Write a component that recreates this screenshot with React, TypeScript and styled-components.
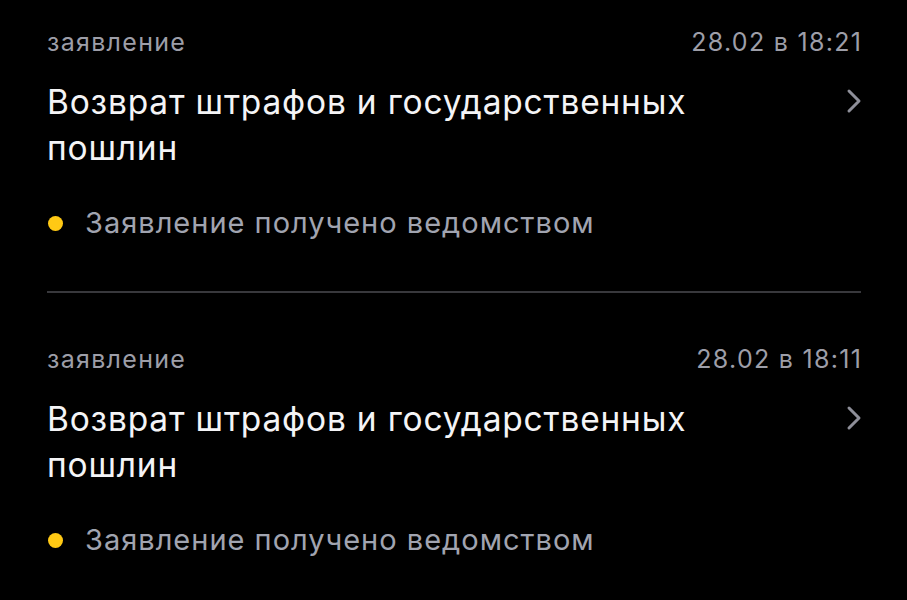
import React from "react";
import styled, { createGlobalStyle } from "styled-components";

const GlobalStyle = createGlobalStyle`
  html, body {
    margin: 0;
    padding: 0;
    background: #000;
  }
  body {
    font-family: Inter, "Noto Sans", "Liberation Sans", sans-serif;
    -webkit-font-smoothing: antialiased;
  }
`;

const List = styled.div`
  display: flex;
  flex-direction: column;
  padding: 28px 46px 0 47px;
  background: #000;
  min-height: 600px;
  box-sizing: border-box;
`;

const Item = styled.div`
  display: flex;
  flex-direction: column;
  padding-bottom: 50px;
`;

const Divider = styled.div`
  height: 2px;
  background: #38383c;
  margin-bottom: 52px;
`;

const Header = styled.div`
  display: flex;
  justify-content: space-between;
  align-items: center;
  font-size: 25px;
  line-height: 28px;
  color: #9d9ea8;
  letter-spacing: 1.3px;
`;

const DateText = styled.span`
  margin-right: -1.3px;
`;

const TitleRow = styled.div`
  display: flex;
  justify-content: space-between;
  align-items: flex-start;
  margin-top: 23px;
`;

const Title = styled.div`
  font-size: 33.5px;
  line-height: 46px;
  letter-spacing: 0.8px;
  color: #f4f4f6;
  max-width: 700px;
`;

const Chevron = styled.svg`
  width: 16px;
  height: 26px;
  margin-top: 9px;
  margin-right: -1px;
  flex-shrink: 0;
`;

const Status = styled.div`
  display: flex;
  align-items: center;
  gap: 22px;
  margin-top: 34px;
  font-size: 29px;
  line-height: 36px;
  letter-spacing: 1px;
  color: #a1a4b0;
  padding-left: 1px;
`;

const Dot = styled.span<{ $color: string }>`
  width: 15px;
  height: 15px;
  border-radius: 50%;
  background: ${({ $color }) => $color};
  flex-shrink: 0;
`;

type Application = {
  kind: string;
  date: string;
  title: string;
  status: string;
};

const items: Application[] = [
  {
    kind: "заявление",
    date: "28.02 в 18:21",
    title: "Возврат штрафов и государственных пошлин",
    status: "Заявление получено ведомством",
  },
  {
    kind: "заявление",
    date: "28.02 в 18:11",
    title: "Возврат штрафов и государственных пошлин",
    status: "Заявление получено ведомством",
  },
];

const ApplicationItem = ({ item }: { item: Application }) => (
  <Item>
    <Header>
      <span>{item.kind}</span>
      <DateText>{item.date}</DateText>
    </Header>
    <TitleRow>
      <Title>{item.title}</Title>
      <Chevron viewBox="0 0 16 26" fill="none">
        <path
          d="M3 3l10 10-10 10"
          stroke="#8e8f99"
          strokeWidth="3"
          strokeLinecap="round"
          strokeLinejoin="round"
        />
      </Chevron>
    </TitleRow>
    <Status>
      <Dot $color="#ffc914" />
      <span>{item.status}</span>
    </Status>
  </Item>
);

export default function App() {
  return (
    <>
      <GlobalStyle />
      <List>
        {items.map((item, i) => (
          <React.Fragment key={i}>
            {i > 0 && <Divider />}
            <ApplicationItem item={item} />
          </React.Fragment>
        ))}
      </List>
    </>
  );
}
